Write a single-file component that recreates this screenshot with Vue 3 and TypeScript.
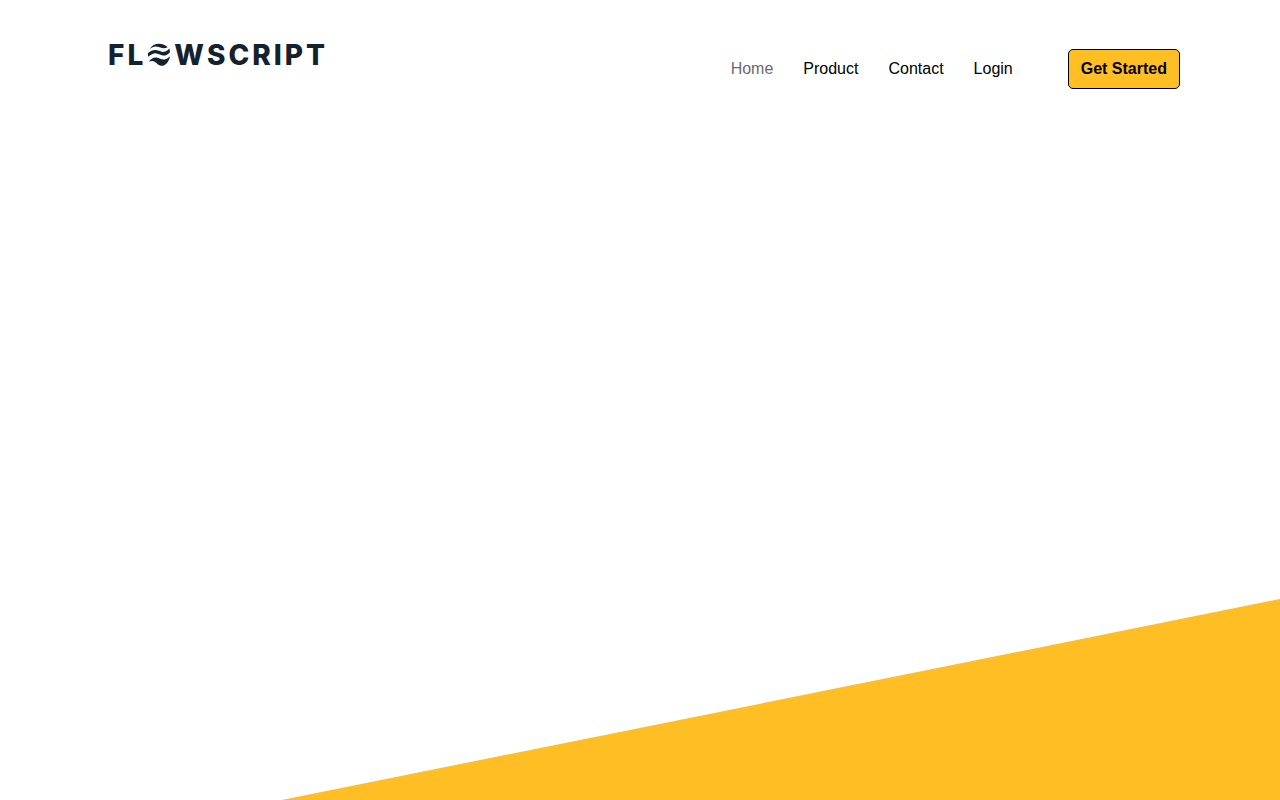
<script setup lang="ts">
interface NavLink {
  label: string
  active: boolean
}

const links: NavLink[] = [
  { label: 'Home', active: true },
  { label: 'Product', active: false },
  { label: 'Contact', active: false },
  { label: 'Login', active: false },
]

const start: string[] = ['F', 'L']
const end: string[] = ['W', 'S', 'C', 'R', 'I', 'P', 'T']
</script>

<template>
  <div class="page">
    <header class="header">
      <a class="logo" href="#" aria-label="Flowscript">
        <span v-for="letter in start" :key="letter">{{ letter }}</span>
        <svg class="waves" viewBox="0 0 24 24" aria-hidden="true">
          <path d="M2.5 6.2C5 2.4 8 .8 12 .8C15.6 .8 18.6 2.1 20.6 4.2C18.2 5.7 15.6 5.5 12.6 4.3C9 2.9 6 3.1 2.5 6.2Z" />
          <path d="M1 13.8V10.1C3.8 7.7 6.2 6.7 9 7C12.4 7.4 14.6 9.4 17.4 8.8C19.6 8.3 21 6.9 22.4 5.5L23 9.2C20.6 11.9 18.2 13 15.6 12.5C12 11.8 10 10 7.2 10.4C4.8 10.8 3 12.3 1 13.8Z" />
          <path d="M1.8 18.6C4.4 15.5 6.8 14.2 9.6 14.6C12.6 15 14.8 17.1 17.6 16.5C19.8 16 21.5 14.7 23 13.2C22 18.8 18.6 22.8 14.4 22.8C10.8 22.6 9.4 18.7 6.2 18.2C4.6 18 3.2 18.2 1.8 18.6Z" />
        </svg>
        <span v-for="letter in end" :key="letter">{{ letter }}</span>
      </a>
      <nav class="nav">
        <a
          v-for="link in links"
          :key="link.label"
          href="#"
          :class="['link', { active: link.active }]"
        >{{ link.label }}</a>
        <button class="cta" type="button">Get Started</button>
      </nav>
    </header>
    <div class="slope"></div>
  </div>
</template>

<style>
body {
  margin: 0;
  background: #fff;
}
</style>

<style scoped>
.page {
  display: flex;
  flex-direction: column;
  min-height: 100vh;
  font-family: "Liberation Sans", Arial, sans-serif;
  font-size: 16px;
}

.header {
  display: flex;
  align-items: flex-start;
  justify-content: space-between;
  padding: 40px 100px 0 108px;
}

.logo {
  display: flex;
  align-items: center;
  gap: 3px;
  color: #14212e;
  font-family: Inter, sans-serif;
  font-size: 28px;
  font-weight: 800;
  line-height: 30px;
  text-decoration: none;
}

.waves {
  width: 24px;
  height: 24px;
  margin-left: 1px;
  fill: #14212e;
}

.nav {
  display: flex;
  align-items: center;
  gap: 30px;
  padding-top: 9px;
}

.link {
  color: #000;
  text-decoration: none;
}

.link.active {
  color: #6b6b6b;
}

.cta {
  height: 40px;
  margin-left: 25px;
  padding: 0 12px;
  border: 1px solid #000;
  border-radius: 5px;
  background: #ffbe24;
  color: #000;
  font: bold 16px "Liberation Sans", Arial, sans-serif;
  cursor: pointer;
}

.slope {
  height: 201px;
  margin-top: auto;
  background: #ffbe24;
  clip-path: polygon(100% 0, 100% 100%, 22% 100%);
}
</style>
